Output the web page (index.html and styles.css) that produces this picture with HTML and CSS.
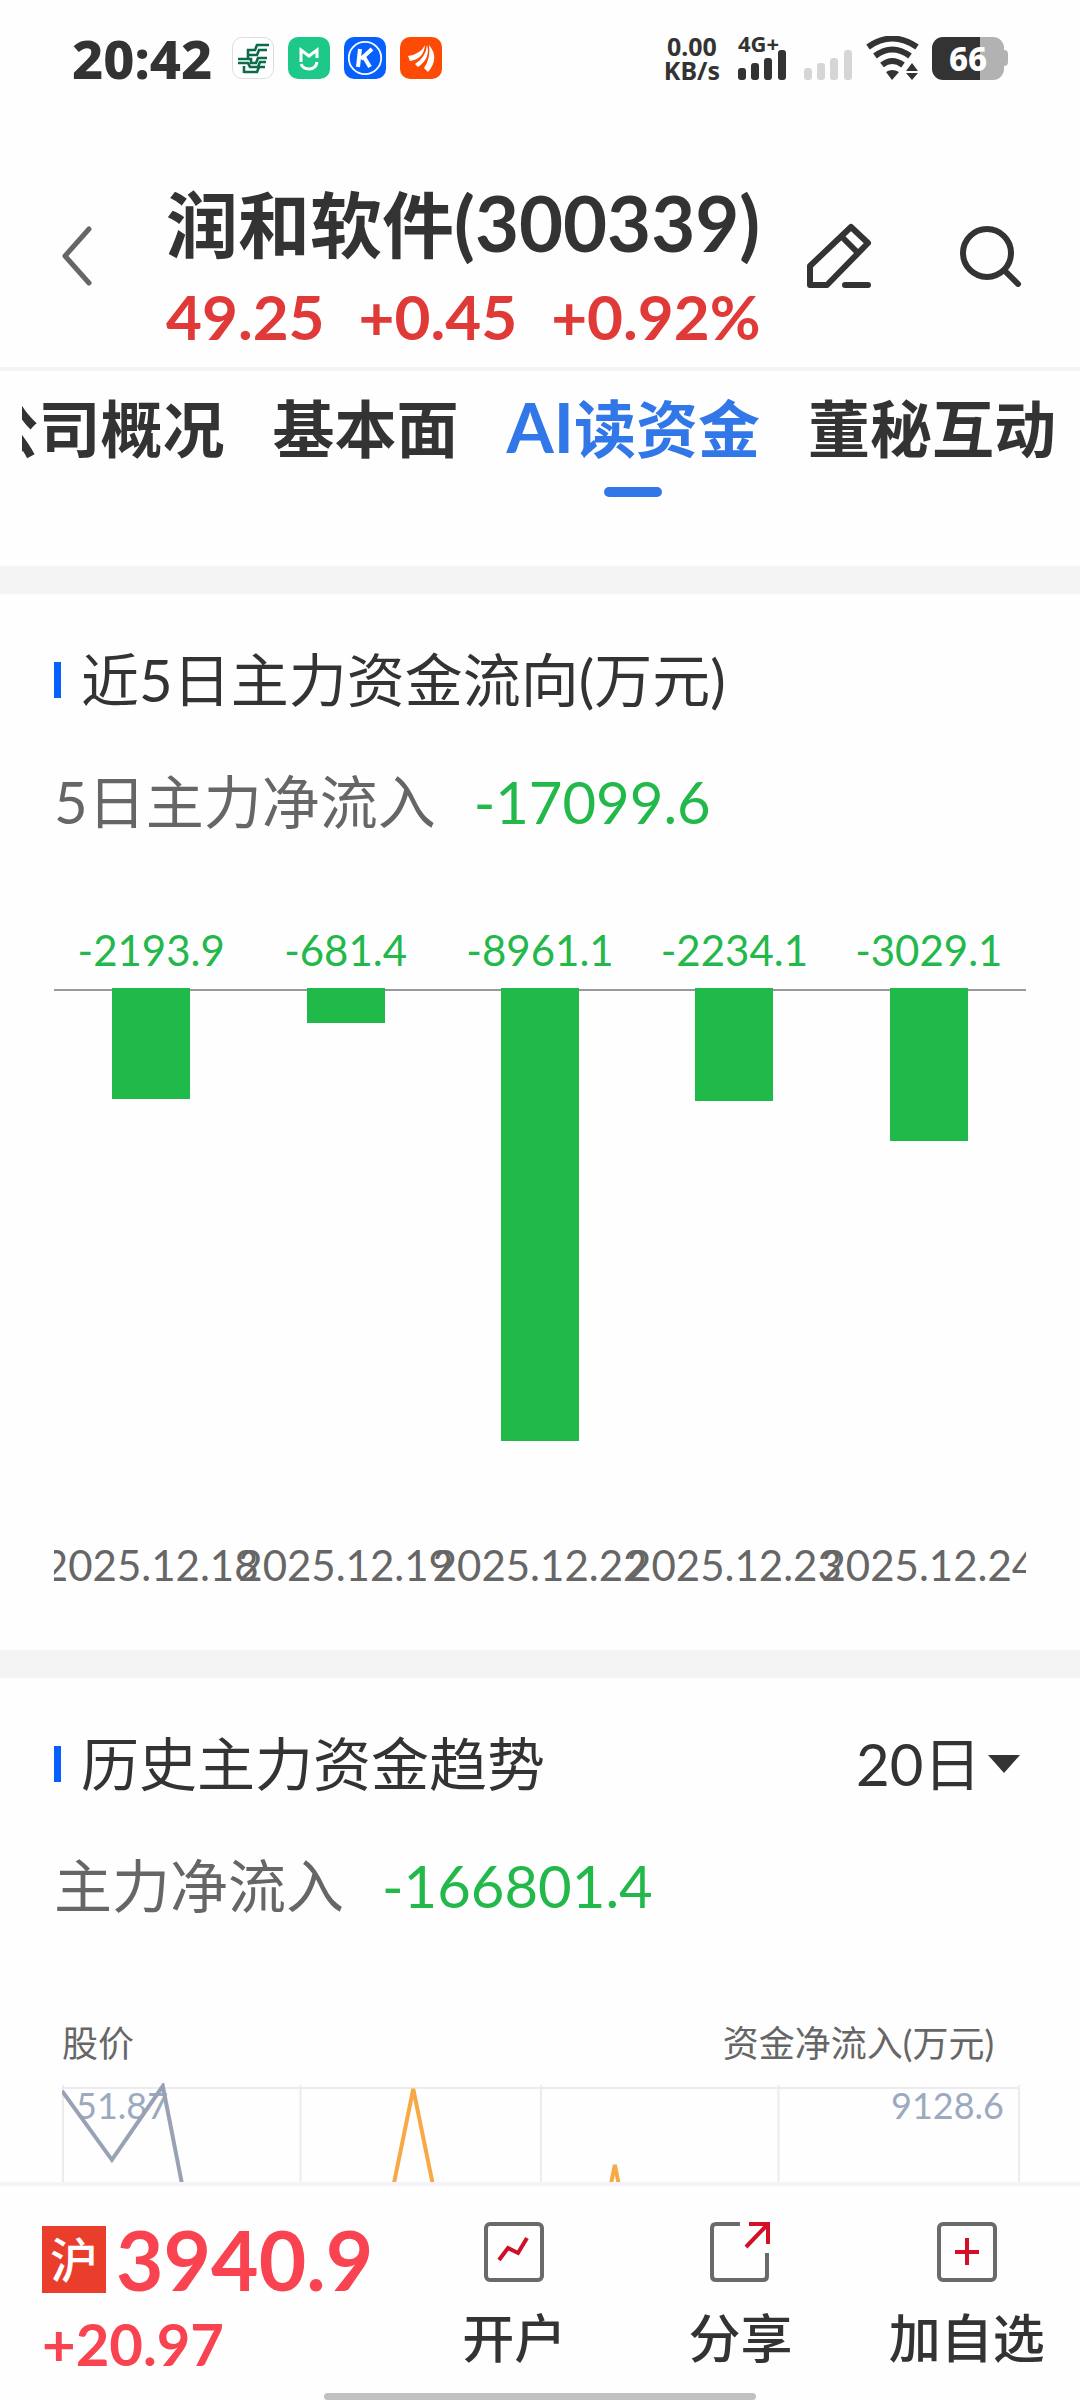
FILE: index.html
```html
<!DOCTYPE html>
<html lang="zh-CN">
<head>
<meta charset="utf-8">
<meta name="viewport" content="width=device-width">
<title>润和软件(300339)</title>
<link rel="stylesheet" href="styles.css">
</head>
<body>
<div class="status">
  <div class="status-left">
    <span class="time">20:42</span>
    <svg class="app-icon" viewBox="0 0 42 42"><rect x=".5" y=".5" width="41" height="41" rx="9.500" fill="#fff" stroke="#ddd"/><g fill="none" stroke="#0b6b4a" stroke-width="2.600"><path d="M37 8H25l-2 5h-7v8M35 13h-8l-2 5h-8M6 22h13v4h5l2-5h9M6 26h10l2 4h8l2-5h6M12 35h13l2-5h6M12 36v-7"/></g></svg>
    <svg class="app-icon" viewBox="0 0 42 42"><rect width="42" height="42" rx="10" fill="#1ec888"/><path d="M13 25V13l8 6 8-6v8M29 25q-1 7-8 7-6 0-8-5" fill="none" stroke="#fff" stroke-width="3"/></svg>
    <svg class="app-icon" viewBox="0 0 42 42"><rect width="42" height="42" rx="10" fill="#0560fd"/><circle cx="21" cy="21" r="16.200" fill="none" stroke="#fff" stroke-width="1.800"/><path d="M16 12l-2 18M28 12L17 22M20 20l6 10" fill="none" stroke="#fff" stroke-width="4"/></svg>
    <svg class="app-icon" viewBox="0 0 42 42"><rect width="42" height="42" rx="10" fill="#fd4a04"/><path d="M8 19Q21 17 25 8 24 22 10 24ZM15 27Q26 20 27 8 31 21 18 30ZM24 31Q31 21 29 8 40 21 28 35Z" fill="#fff"/></svg>
  </div>
  <div class="status-right">
    <div class="speed"><span>0.00</span><span>KB/s</span></div>
    <div class="cell"><span class="net">4G+</span>
      <svg width="48" height="30" viewBox="0 0 48 30" fill="#333"><rect y="18" width="8" height="12" rx="3"/><rect x="13" y="13" width="8" height="17" rx="3"/><rect x="26" y="8" width="8" height="22" rx="3"/><rect x="40" width="8" height="30" rx="3"/></svg></div>
    <svg class="sim" width="48" height="30" viewBox="0 0 48 30" fill="#d6d6d6"><rect y="18" width="8" height="12" rx="3"/><rect x="13" y="13" width="8" height="17" rx="3"/><rect x="26" y="8" width="8" height="22" rx="3"/><rect x="40" width="8" height="30" rx="3"/></svg>
    <svg class="wifi" width="54" height="44" viewBox="0 0 54 44"><g fill="none" stroke="#333" stroke-width="6"><path d="M2 11Q26-6 51 11"/><path d="M9 20Q26 7 44 20"/><path d="M16 29Q26 21 37 29"/></g><path d="M20 36q6-4 13 0l-7 8ZM46 27l6 8H40ZM40 37h12l-6 7Z" fill="#333"/></svg>
    <div class="battery"><span class="battery-body">66</span><span class="battery-cap"></span></div>
  </div>
</div>

<header class="header">
  <button class="icon-btn back" aria-label="返回"><svg width="30" height="60" viewBox="0 0 30 60"><path d="M27 3L3 30l24 27" fill="none" stroke="#666" stroke-width="5" stroke-linecap="round" stroke-linejoin="round"/></svg></button>
  <div class="stock">
    <h1 class="stock-name">润和软件<span class="stock-code">(300339)</span></h1>
    <div class="quote"><span>49.25</span><span>+0.45</span><span>+0.92%</span></div>
  </div>
  <div class="actions">
    <button class="icon-btn" aria-label="编辑"><svg width="66" height="66" viewBox="0 0 66 66" fill="none" stroke="#333" stroke-width="6" stroke-linejoin="round" stroke-linecap="round"><path d="M45 4L62 20 21 62H4V43ZM36 14l16 16M39 62h23"/></svg></button>
    <button class="icon-btn" aria-label="搜索"><svg width="62" height="62" viewBox="0 0 62 62" fill="none" stroke="#333" stroke-width="6" stroke-linecap="round"><circle cx="27" cy="28" r="24"/><path d="M45 46l13 13"/></svg></button>
  </div>
</header>

<nav class="tabs">
  <a class="tab" href="#">公司概况</a>
  <a class="tab" href="#">基本面</a>
  <a class="tab active" href="#"><span class="latin">AI</span>读资金</a>
  <a class="tab" href="#">董秘互动</a>
</nav>

<main class="content">
  <section class="panel">
    <div class="panel-head"><h2 class="panel-title">近5日主力资金流向(万元)</h2></div>
    <p class="summary"><span>5日主力净流入</span><span class="down">-17099.6</span></p>
    <div class="flow">
      <div class="flow-row down"><span>-2193.9</span><span>-681.4</span><span>-8961.1</span><span>-2234.1</span><span>-3029.1</span></div>
      <div class="bars">
        <i style="height:111px"></i><i style="height:35px"></i><i style="height:453px"></i><i style="height:113px"></i><i style="height:153px"></i>
      </div>
      <div class="flow-row dates"><span>2025.12.18</span><span>2025.12.19</span><span>2025.12.22</span><span>2025.12.23</span><span>2025.12.24</span></div>
    </div>
  </section>

  <section class="panel">
    <div class="panel-head">
      <h2 class="panel-title">历史主力资金趋势</h2>
      <label class="range"><select aria-label="周期"><option>20日</option></select><svg width="32" height="18" viewBox="0 0 32 18"><path d="M0 0h32L16 18Z" fill="#333"/></svg></label>
    </div>
    <p class="summary"><span>主力净流入</span><span class="down">-166801.4</span></p>
    <div class="trend">
      <div class="trend-names"><span>股价</span><span>资金净流入(万元)</span></div>
      <div class="trend-plot">
        <div class="trend-max"><span>51.87</span><span>9128.6</span></div>
        <svg class="trend-svg" viewBox="0 0 960 400" fill="none">
          <path d="M1 5H959M1 2V400M239 2V400M480 2V400M718 2V400M959 2V400" stroke="#ececee" stroke-width="2"/>
          <path d="M0 8L50 77 101 3 120 100 151 260" stroke="#98a2b4" stroke-width="4"/>
          <path d="M302 250L352 6 402 250M504 330L554 82 604 330" stroke="#f6a945" stroke-width="4"/>
        </svg>
      </div>
    </div>
  </section>
</main>

<footer class="footer">
  <div class="index">
    <div class="index-main"><span class="badge">沪</span><span class="index-value">3940.9</span></div>
    <div class="index-change">+20.97</div>
  </div>
  <button class="foot-btn"><svg width="60" height="60" viewBox="0 0 60 60" fill="none"><rect x="2" y="2" width="56" height="56" rx="4" stroke="#6a6a6a" stroke-width="4"/><path d="M15 38L24 26 34 31 43 16" stroke="#cf1029" stroke-width="4"/></svg>开户</button>
  <button class="foot-btn"><svg width="60" height="60" viewBox="0 0 60 60" fill="none"><path d="M30 2H6Q2 2 2 6V54Q2 58 6 58H53Q57 58 57 54V31" stroke="#6a6a6a" stroke-width="4"/><path d="M39 2H58V22M57 3L36 25" stroke="#d60f28" stroke-width="4"/></svg>分享</button>
  <button class="foot-btn"><svg width="60" height="60" viewBox="0 0 60 60" fill="none"><rect x="2" y="2" width="56" height="56" rx="4" stroke="#6a6a6a" stroke-width="4"/><path d="M18 30H42M30 16V43" stroke="#d60f28" stroke-width="4"/></svg>加自选</button>
  <div class="home-bar"></div>
</footer>
</body>
</html>
```
FILE: styles.css
```css
* { box-sizing: border-box; margin: 0; padding: 0; }

body {
  display: flex;
  flex-direction: column;
  height: 100vh;
  overflow: hidden;
  background: #fefefe;
  color: #333;
  font-family: Lato, "Noto Sans CJK SC", sans-serif;
}

button, select {
  border: 0;
  background: none;
  color: inherit;
  font: inherit;
}

svg { display: block; flex: none; }
a { color: inherit; text-decoration: none; }
.down { color: #22b84a; }

/* Status bar */
.status {
  display: flex;
  justify-content: space-between;
  align-items: center;
  flex: none;
  height: 116px;
  padding: 0 72px;
  font-family: "Noto Sans", sans-serif;
  font-weight: 700;
}
.status-left { display: flex; align-items: center; gap: 14px; }
.time { margin-right: 6px; font-size: 54px; font-weight: 800; line-height: 60px; }
.app-icon { width: 42px; height: 42px; }
.status-right { display: flex; align-items: center; }
.speed {
  display: flex;
  flex-direction: column;
  align-items: center;
  margin-right: 18px;
  font-size: 25px;
  line-height: 24px;
}
.cell { display: flex; flex-direction: column; margin-right: 18px; }
.net { height: 14px; font-size: 22px; line-height: 14px; }
.sim { margin: 14px 14px 0 0; }
.wifi { margin-right: 12px; }
.battery { display: flex; align-items: center; }
.battery-body {
  width: 72px;
  border-radius: 11px;
  background: linear-gradient(90deg, #333 66%, #b2b2b2 66%);
  color: #fff;
  font-size: 33px;
  font-weight: 800;
  line-height: 43px;
  text-align: center;
}
.battery-cap { width: 4px; height: 16px; border-radius: 0 4px 4px 0; background: #b2b2b2; }

/* Stock header */
.header {
  display: flex;
  flex: none;
  padding: 60px 58px 7px 62px;
  border-bottom: 4px solid #f4f4f4;
}
.icon-btn { display: flex; align-items: center; height: 160px; }
.back { margin-right: 74px; }
.stock-name { height: 96px; font-size: 72px; font-weight: 700; line-height: 96px; white-space: nowrap; }
.stock-code { font-size: 76px; line-height: 1; }
.quote {
  display: flex;
  gap: 34px;
  color: #e03a38;
  font-size: 62px;
  font-weight: 700;
  line-height: 88px;
}
.actions { display: flex; gap: 88px; margin-left: auto; }

/* Tabs */
.tabs {
  display: flex;
  justify-content: flex-end;
  flex: none;
  gap: 48px;
  margin: 0 24px 0 22px;
  padding: 16px 0 69px;
  overflow: hidden;
}
.tab { flex: none; font-size: 62px; font-weight: 700; line-height: 84px; white-space: nowrap; }
.latin { font-size: 68px; line-height: 1; }
.tab::after {
  content: "";
  display: block;
  width: 58px;
  height: 10px;
  margin: 16px auto 0;
  border-radius: 5px;
}
.active { color: #3177e8; }
.active::after { background: #3177e8; }

/* Panels */
.content { flex: 1; min-height: 0; overflow: hidden; }
.panel { padding: 44px 54px 55px; border-top: 28px solid #f4f4f4; }
.panel-head { display: flex; justify-content: space-between; line-height: 84px; }
.panel-title {
  display: flex;
  align-items: center;
  gap: 20px;
  font-size: 58px;
  font-weight: 400;
}
.panel-title::before { content: ""; width: 7px; height: 36px; background: #0560fd; }
.summary {
  display: flex;
  gap: 38px;
  margin-top: 38px;
  font-size: 58px;
  line-height: 84px;
  color: #666;
}
.summary .down { color: #22b84a; }
.range { display: flex; align-items: center; gap: 6px; margin-right: 6px; }
.range select { appearance: none; font-size: 58px; line-height: 84px; }

/* Five day flow */
.flow { margin-top: 76px; overflow: hidden; }
.flow-row { display: flex; font-size: 42px; line-height: 60px; }
.flow-row span { display: flex; flex: 1 1 0; justify-content: center; width: 0; white-space: nowrap; }
.dates { color: #666; }
.bars {
  display: flex;
  height: 547px;
  margin-top: 8px;
  background: linear-gradient(#999, #999) 0 1px / 100% 2px no-repeat;
}
.bars i { width: 78px; margin: 0 auto; background: #1fba4a; }

/* Trend */
.trend { margin: 87px 6px 0 8px; }
.trend-names {
  display: flex;
  justify-content: space-between;
  padding-right: 26px;
  font-size: 36px;
  line-height: 56px;
  color: #666;
}
.trend-plot { position: relative; margin-top: 12px; }
.trend-max {
  position: absolute;
  inset: 0 0 auto;
  display: flex;
  justify-content: space-between;
  padding: 0 16px 0 14px;
  font-size: 36px;
  line-height: 44px;
  color: #9caac0;
}
.trend-svg { position: relative; width: 100%; }

/* Bottom bar */
.footer {
  position: relative;
  display: flex;
  flex: none;
  height: 218px;
  border-top: 4px solid #f4f4f8;
}
.index { width: 401px; padding: 32px 0 0 42px; color: #f94350; font-weight: 700; }
.index-main { display: flex; align-items: center; gap: 10px; }
.badge {
  width: 64px;
  background: #ea3e2c;
  color: #fff;
  font-size: 48px;
  font-weight: 500;
  line-height: 67px;
  text-align: center;
}
.index-value { font-size: 82px; line-height: 82px; }
.index-change { margin-top: 4px; font-size: 58px; line-height: 80px; }
.foot-btn {
  display: flex;
  flex: 1;
  flex-direction: column;
  align-items: center;
  gap: 18px;
  padding-top: 36px;
  font-size: 52px;
  font-weight: 500;
  line-height: 76px;
}
.home-bar {
  position: absolute;
  bottom: 0;
  left: 30%;
  width: 40%;
  height: 7px;
  border-radius: 4px;
  background: #c1c1c1;
}
```
